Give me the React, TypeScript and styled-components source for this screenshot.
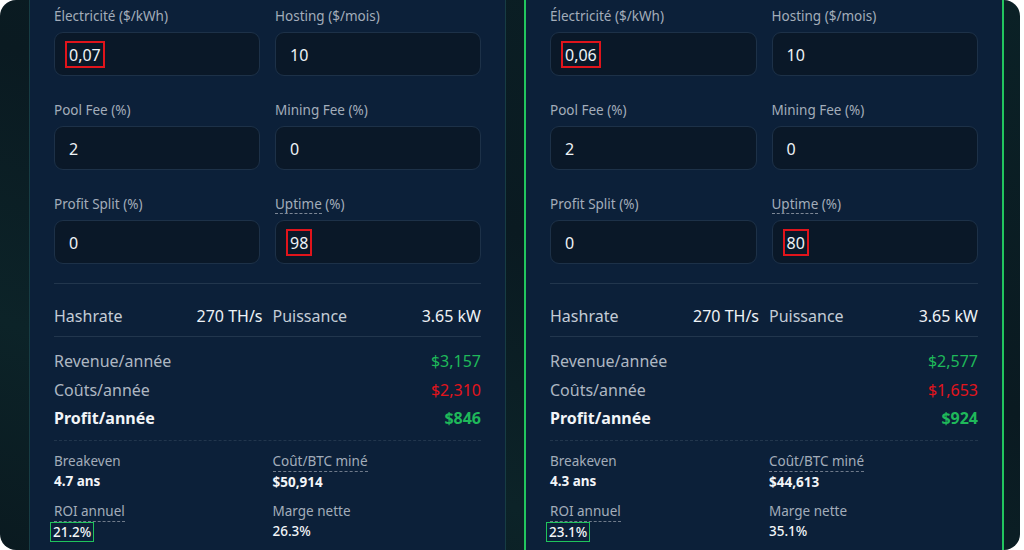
import React from 'react';
import styled, { createGlobalStyle } from 'styled-components';

const GlobalStyle = createGlobalStyle`
  html, body {
    margin: 0;
    padding: 0;
    background: #ffffff;
  }
  body {
    font-family: "Noto Sans", "Open Sans", Arial, sans-serif;
    -webkit-font-smoothing: antialiased;
  }
`;

type Scenario = {
    electricity: string;
    hosting: string;
    poolFee: string;
    miningFee: string;
    profitSplit: string;
    uptime: string;
    hashrate: string;
    power: string;
    revenue: string;
    costs: string;
    profit: string;
    breakeven: string;
    costPerBtc: string;
    roi: string;
    margin: string;
    selected?: boolean;
};

const scenarios: Scenario[] = [
    {
        electricity: '0,07', hosting: '10', poolFee: '2', miningFee: '0', profitSplit: '0', uptime: '98',
        hashrate: '270 TH/s', power: '3.65 kW',
        revenue: '$3,157', costs: '$2,310', profit: '$846',
        breakeven: '4.7 ans', costPerBtc: '$50,914', roi: '21.2%', margin: '26.3%',
    },
    {
        electricity: '0,06', hosting: '10', poolFee: '2', miningFee: '0', profitSplit: '0', uptime: '80',
        hashrate: '270 TH/s', power: '3.65 kW',
        revenue: '$2,577', costs: '$1,653', profit: '$924',
        breakeven: '4.3 ans', costPerBtc: '$44,613', roi: '23.1%', margin: '35.1%',
        selected: true,
    },
];

const Frame = styled.div`
  width: 1020px;
  height: 550px;
  border-radius: 16px;
  overflow: hidden;
  background: linear-gradient(200deg, #0b2126 0%, #0a1a21 45%, #0c2328 75%, #0a1a20 100%);
  padding-left: 29px;
  box-sizing: border-box;
  display: flex;
  gap: 18px;
`;

const Card = styled.div<{ selected?: boolean }>`
  width: ${({ selected }) => (selected ? '480px' : '477px')};
  box-sizing: border-box;
  background: #0c2039;
  border-left: ${({ selected }) => (selected ? '2px solid #22c55e' : '1px solid #173c44')};
  border-right: ${({ selected }) => (selected ? '2px solid #22c55e' : '1px solid #173c44')};
  padding: 6px 24px 0;
  display: flex;
  flex-direction: column;
`;

const FieldGrid = styled.div`
  display: grid;
  grid-template-columns: 1fr 1fr;
  column-gap: 15px;
  row-gap: 24px;
`;

const Field = styled.div`
  display: flex;
  flex-direction: column;
  gap: 6px;
`;

const Label = styled.div`
  font-size: 13.5px;
  line-height: 20px;
  color: #a3adba;
`;

const Hint = styled.span`
  border-bottom: 1px dashed #7d8796;
`;

const InputBox = styled.div`
  height: 44px;
  box-sizing: border-box;
  background: #0a1828;
  border: 1px solid #1d3148;
  border-radius: 9px;
  display: flex;
  align-items: center;
  padding-left: 14px;
  font-size: 16px;
  color: #eef2f6;
`;

const Value = styled.span<{ marked?: boolean }>`
  padding: 2px 2px 1px;
  margin-left: -4px;
  border: 2px solid ${({ marked }) => (marked ? '#e0141b' : 'transparent')};
  line-height: 20px;
`;

const Divider = styled.div<{ dashed?: boolean; top?: number }>`
  height: 0;
  border-top: 1px ${({ dashed }) => (dashed ? 'dashed' : 'solid')} #22364d;
  margin-top: ${({ top }) => top ?? 0}px;
`;

const SpecGrid = styled.div`
  display: grid;
  grid-template-columns: 1fr 1fr;
  column-gap: 10px;
  padding: 20px 0 8px;
`;

const SpecItem = styled.div`
  display: flex;
  justify-content: space-between;
  font-size: 16px;
  line-height: 24px;
`;

const SpecLabel = styled.span`
  color: #c4ccd6;
`;

const SpecValue = styled.span`
  color: #eef2f6;
`;

const Totals = styled.div`
  display: flex;
  flex-direction: column;
  padding: 10px 0 7px;
`;

const TotalRow = styled.div<{ strong?: boolean }>`
  display: flex;
  justify-content: space-between;
  font-size: 16px;
  line-height: 28.5px;
  font-weight: ${({ strong }) => (strong ? 700 : 400)};
  color: ${({ strong }) => (strong ? '#f2f5f8' : '#aeb7c2')};
`;

const Amount = styled.span<{ tone: 'gain' | 'loss' }>`
  color: ${({ tone }) => (tone === 'gain' ? '#1fb85a' : '#e3141c')};
`;

const StatsGrid = styled.div`
  display: grid;
  grid-template-columns: 1fr 1fr;
  column-gap: 10px;
  row-gap: 11px;
  padding-top: 11px;
`;

const Stat = styled.div`
  display: flex;
  flex-direction: column;
  align-items: flex-start;
`;

const StatLabel = styled.span<{ hint?: boolean }>`
  font-size: 13.5px;
  line-height: 19px;
  color: #a3adba;
  border-bottom: ${({ hint }) => (hint ? '1px dashed #6f7a8a' : 'none')};
`;

const StatValue = styled.span<{ boxed?: boolean; bold?: boolean }>`
  font-size: 13.5px;
  line-height: 18px;
  font-weight: ${({ bold }) => (bold ? 700 : 500)};
  color: #f2f5f8;
  margin-top: ${({ boxed }) => (boxed ? '0' : '1px')};
  margin-left: ${({ boxed }) => (boxed ? '-4px' : '0')};
  padding: ${({ boxed }) => (boxed ? '0 2px' : '0')};
  border: ${({ boxed }) => (boxed ? '1.5px solid #1fc35c' : 'none')};
`;

const ScenarioCard = ({ s }: { s: Scenario }) => (
    <Card selected={s.selected}>
        <FieldGrid>
            <Field>
                <Label>Électricité ($/kWh)</Label>
                <InputBox><Value marked>{s.electricity}</Value></InputBox>
            </Field>
            <Field>
                <Label>Hosting ($/mois)</Label>
                <InputBox><Value>{s.hosting}</Value></InputBox>
            </Field>
            <Field>
                <Label>Pool Fee (%)</Label>
                <InputBox><Value>{s.poolFee}</Value></InputBox>
            </Field>
            <Field>
                <Label>Mining Fee (%)</Label>
                <InputBox><Value>{s.miningFee}</Value></InputBox>
            </Field>
            <Field>
                <Label>Profit Split (%)</Label>
                <InputBox><Value>{s.profitSplit}</Value></InputBox>
            </Field>
            <Field>
                <Label><Hint>Uptime</Hint> (%)</Label>
                <InputBox><Value marked>{s.uptime}</Value></InputBox>
            </Field>
        </FieldGrid>

        <Divider top={19} />
        <SpecGrid>
            <SpecItem>
                <SpecLabel>Hashrate</SpecLabel>
                <SpecValue>{s.hashrate}</SpecValue>
            </SpecItem>
            <SpecItem>
                <SpecLabel>Puissance</SpecLabel>
                <SpecValue>{s.power}</SpecValue>
            </SpecItem>
        </SpecGrid>

        <Divider />
        <Totals>
            <TotalRow>
                <span>Revenue/année</span>
                <Amount tone="gain">{s.revenue}</Amount>
            </TotalRow>
            <TotalRow>
                <span>Coûts/année</span>
                <Amount tone="loss">{s.costs}</Amount>
            </TotalRow>
            <TotalRow strong>
                <span>Profit/année</span>
                <Amount tone="gain">{s.profit}</Amount>
            </TotalRow>
        </Totals>

        <Divider dashed />
        <StatsGrid>
            <Stat>
                <StatLabel>Breakeven</StatLabel>
                <StatValue bold>{s.breakeven}</StatValue>
            </Stat>
            <Stat>
                <StatLabel hint>Coût/BTC miné</StatLabel>
                <StatValue bold>{s.costPerBtc}</StatValue>
            </Stat>
            <Stat>
                <StatLabel hint>ROI annuel</StatLabel>
                <StatValue boxed>{s.roi}</StatValue>
            </Stat>
            <Stat>
                <StatLabel>Marge nette</StatLabel>
                <StatValue>{s.margin}</StatValue>
            </Stat>
        </StatsGrid>
    </Card>
);

export default function App() {
    return (
        <>
            <GlobalStyle />
            <Frame>
                {scenarios.map((s, i) => (
                    <ScenarioCard key={i} s={s} />
                ))}
            </Frame>
        </>
    );
}
